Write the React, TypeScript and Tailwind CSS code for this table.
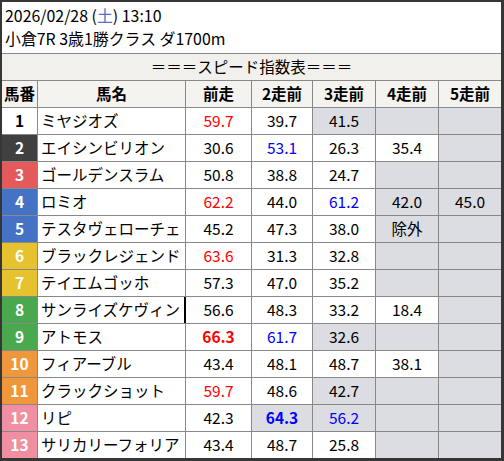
import React from "react";

type Row = {
  no: number;
  name: string;
  badge: string;
  numText: string;
  vals: (string | null)[];
  gray: boolean[];
  color?: (string | null)[];
  bold?: boolean[];
  cursor?: boolean;
};

const rows: Row[] = [
  { no: 1, name: "ミヤジオズ", badge: "bg-white", numText: "text-black", vals: ["59.7", "39.7", "41.5", null, null], gray: [false, false, true, true, true], color: ["red", null, null, null, null] },
  { no: 2, name: "エイシンビリオン", badge: "bg-[#404040]", numText: "text-white", vals: ["30.6", "53.1", "26.3", "35.4", null], gray: [false, false, false, false, true], color: [null, "blue", null, null, null] },
  { no: 3, name: "ゴールデンスラム", badge: "bg-[#e45a5a]", numText: "text-white", vals: ["50.8", "38.8", "24.7", null, null], gray: [false, false, false, true, true] },
  { no: 4, name: "ロミオ", badge: "bg-[#4472c4]", numText: "text-white", vals: ["62.2", "44.0", "61.2", "42.0", "45.0"], gray: [false, false, false, true, true], color: ["red", null, "blue", null, null] },
  { no: 5, name: "テスタヴェローチェ", badge: "bg-[#4472c4]", numText: "text-white", vals: ["45.2", "47.3", "38.0", "除外", null], gray: [false, false, false, true, true] },
  { no: 6, name: "ブラックレジェンド", badge: "bg-[#e6c22e]", numText: "text-white", vals: ["63.6", "31.3", "32.8", null, null], gray: [false, false, false, true, true], color: ["red", null, null, null, null] },
  { no: 7, name: "テイエムゴッホ", badge: "bg-[#e6c22e]", numText: "text-white", vals: ["57.3", "47.0", "35.2", null, null], gray: [false, false, false, true, true] },
  { no: 8, name: "サンライズケヴィン", badge: "bg-[#4aa84e]", numText: "text-white", vals: ["56.6", "48.3", "33.2", "18.4", null], gray: [false, false, false, false, true], cursor: true },
  { no: 9, name: "アトモス", badge: "bg-[#4aa84e]", numText: "text-white", vals: ["66.3", "61.7", "32.6", null, null], gray: [false, false, true, true, true], color: ["red", "blue", null, null, null], bold: [true, false, false, false, false] },
  { no: 10, name: "フィアーブル", badge: "bg-[#f0973c]", numText: "text-white", vals: ["43.4", "48.1", "48.7", "38.1", null], gray: [false, false, false, false, true] },
  { no: 11, name: "クラックショット", badge: "bg-[#f0973c]", numText: "text-white", vals: ["59.7", "48.6", "42.7", null, null], gray: [false, false, true, true, true], color: ["red", null, null, null, null] },
  { no: 12, name: "リピ", badge: "bg-[#f08fa1]", numText: "text-white", vals: ["42.3", "64.3", "56.2", null, null], gray: [false, true, true, true, true], color: [null, "blue", "blue", null, null], bold: [false, true, false, false, false] },
  { no: 13, name: "サリカリーフォリア", badge: "bg-[#f08fa1]", numText: "text-white", vals: ["43.4", "48.7", "25.8", null, null], gray: [false, false, false, true, true] },
];

const widths = ["w-[66px]", "w-[61px]", "w-[63px]", "w-[63px]", "w-[63px]"];

const App = () => {
  return (
    <div
      className="w-[504px] h-[461px] bg-white border-t-2 border-l-2 border-r-[3px] border-b-[3px] border-[#363636] text-black text-[15.5px] leading-none"
      style={{ fontFamily: '"Noto Sans CJK JP", "Noto Sans", sans-serif' }}
    >
      <div className="h-[51px] flex flex-col justify-center gap-[7px] pl-[3px] pb-[1px] text-[15.9px]">
        <div>
          2026/02/28 (<span className="text-[#4d73c0]">土</span>) 13:10
        </div>
        <div>小倉7R 3歳1勝クラス ダ1700m</div>
      </div>

      <div className="h-[27px] border-t border-[#888] bg-[#f1f0ec] flex items-center justify-center">
        ＝＝＝スピード指数表＝＝＝
      </div>

      <div className="h-[27px] border-t border-[#888] bg-[#f4f3ef] flex font-bold">
        <div className="w-[35px] flex items-center justify-center">馬番</div>
        <div className="w-[148px] border-l border-[#888] flex items-center justify-center">馬名</div>
        {["前走", "2走前", "3走前", "4走前", "5走前"].map((h, i) => (
          <div key={h} className={`${widths[i]} border-l border-[#888] flex items-center justify-center`}>
            {h}
          </div>
        ))}
      </div>

      {rows.map((r) => (
        <div key={r.no} className="h-[27px] border-t border-[#888] flex">
          <div className={`w-[35px] ${r.badge} ${r.numText} font-bold flex items-center justify-center`}>
            {r.no}
          </div>
          <div className="w-[148px] border-l border-[#888] flex items-center pl-[3px] whitespace-nowrap overflow-hidden">
            {r.name}
          </div>
          {r.vals.map((v, i) => {
            const c = r.color?.[i];
            const b = r.bold?.[i];
            return (
              <div
                key={i}
                className={`${widths[i]} relative border-l border-[#888] flex items-center justify-center ${
                  r.gray[i] ? "bg-[#dcdde2]" : "bg-white"
                } ${c === "red" ? "text-[#ff0000]" : c === "blue" ? "text-[#0000ff]" : "text-black"} ${
                  b ? "font-bold" : ""
                }`}
              >
                {r.cursor && i === 0 && (
                  <span className="absolute left-[-2px] top-0 bottom-0 w-[2px] bg-black" />
                )}
                {v}
              </div>
            );
          })}
        </div>
      ))}
    </div>
  );
};

export default App;
